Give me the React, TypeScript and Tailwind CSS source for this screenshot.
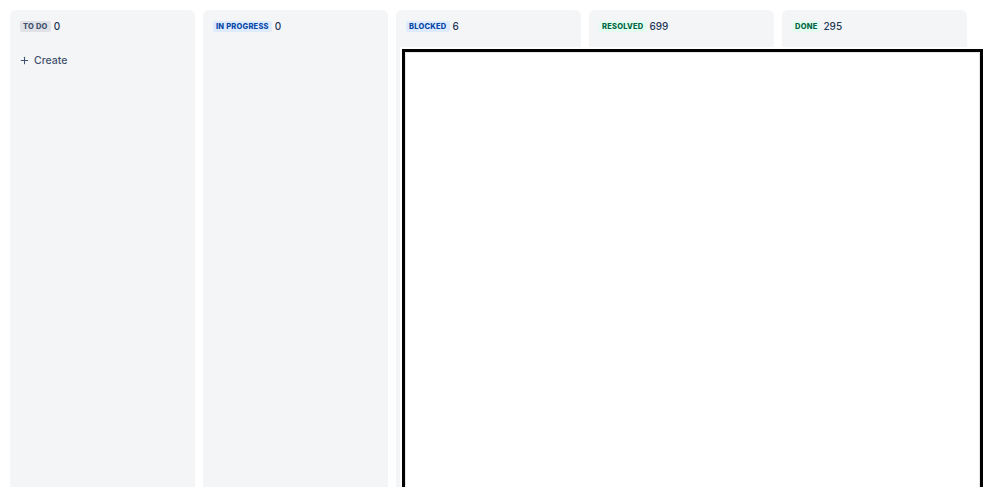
import { Plus } from "lucide-react";

type Column = {
  title: string;
  count: number;
  badge: string;
  create?: boolean;
};

const columns: Column[] = [
  { title: "To do", count: 0, badge: "bg-[#dfe1e6] text-[#42526e]", create: true },
  { title: "In progress", count: 0, badge: "bg-[#deebff] text-[#0747a6]" },
  { title: "Blocked", count: 6, badge: "bg-[#deebff] text-[#0747a6]" },
  { title: "Resolved", count: 699, badge: "bg-[#e3fcef] text-[#006644]" },
  { title: "Done", count: 295, badge: "bg-[#e3fcef] text-[#006644]" },
];

function BoardColumn({ column }: { column: Column }) {
  return (
    <div className="flex h-[520px] w-[185px] shrink-0 flex-col rounded-md bg-[#f4f5f7]">
      <div className="flex items-center gap-[3px] px-[10px] pt-[11px]">
        <span
          className={`flex h-[11px] items-center rounded-[2px] px-[3px] text-[7.5px] font-extrabold uppercase tracking-[0.03em] ${column.badge}`}
        >
          {column.title}
        </span>
        <span className="text-[10px] leading-[11px] font-medium text-[#253858]">
          {column.count}
        </span>
      </div>
      {column.create && (
        <button className="mt-[22px] flex items-center gap-[4px] px-[9px] text-[10.5px] leading-[13px] font-medium text-[#42526e]">
          <Plus className="h-[11px] w-[11px]" strokeWidth={2.25} />
          Create
        </button>
      )}
    </div>
  );
}

export default function App() {
  return (
    <div
      className="relative h-[487px] w-[999px] overflow-hidden bg-white"
      style={{ fontFamily: "Inter, 'Noto Sans', sans-serif" }}
    >
      <div className="flex gap-[8px] p-[10px]">
        {columns.map((column) => (
          <BoardColumn key={column.title} column={column} />
        ))}
      </div>

      {/* drag preview / panel overlay */}
      <div className="absolute left-[400px] top-[47px] h-[480px] w-[585px] bg-white p-[2px]">
        <div className="h-full w-full border-[3.5px] border-black">
          <div className="h-full w-full border border-[#e5e7eb] bg-white" />
        </div>
      </div>
    </div>
  );
}
